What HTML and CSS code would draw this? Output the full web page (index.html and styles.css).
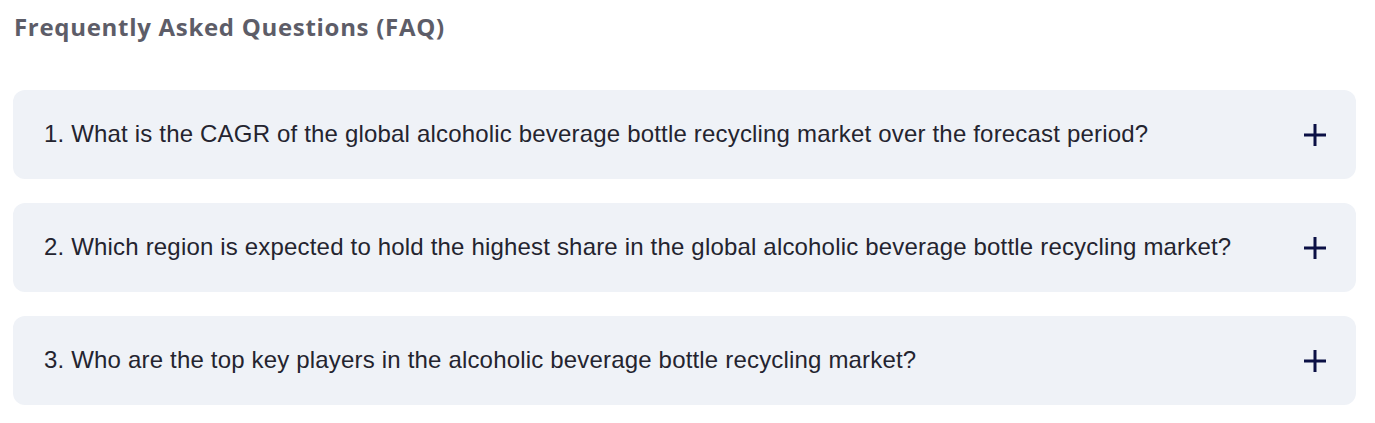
FILE: index.html
```html
<html>
    <head>
        <title>FAQ</title>
        <link rel="stylesheet" href="styles.css">
    </head>
    <body>
        <h2 class="Titulo">Frequently Asked Questions (FAQ)</h2>
        <div class="Lista">
            <!-- Pregunta 1 -->
            <div class="Pregunta">
                <span class="Texto">1. What is the CAGR of the global alcoholic beverage bottle recycling market over the forecast period?</span>
                <svg class="Mas" width="22" height="22" viewBox="0 0 22 22"><path d="M11 0V22M0 11H22" stroke="#0b1045" stroke-width="3"/></svg>
            </div>
            <!-- Pregunta 2 -->
            <div class="Pregunta">
                <span class="Texto">2. Which region is expected to hold the highest share in the global alcoholic beverage bottle recycling market?</span>
                <svg class="Mas" width="22" height="22" viewBox="0 0 22 22"><path d="M11 0V22M0 11H22" stroke="#0b1045" stroke-width="3"/></svg>
            </div>
            <!-- Pregunta 3 -->
            <div class="Pregunta">
                <span class="Texto">3. Who are the top key players in the alcoholic beverage bottle recycling market?</span>
                <svg class="Mas" width="22" height="22" viewBox="0 0 22 22"><path d="M11 0V22M0 11H22" stroke="#0b1045" stroke-width="3"/></svg>
            </div>
        </div>
    </body>
</html>
```
FILE: styles.css
```css
body{
    margin: 0;
    padding: 0 19px 0 13px;
    background-color: white;
}

.Titulo{
    font-family: "Open Sans", sans-serif;
    font-weight: 700;
    font-size: 24px;
    letter-spacing: 0.7px;
    color: #5d5d68;
    margin: 0;
    padding: 11px 0 0 1px;
    line-height: 32px;
}

.Lista{
    display: flex;
    flex-direction: column;
    gap: 24px;
    margin-top: 47px;
}

.Pregunta{
    display: flex;
    justify-content: space-between;
    align-items: center;
    height: 89px;
    padding: 0 30px 0 31px;
    background-color: #eff2f7;
    border-radius: 12px;
}

.Texto{
    font-family: "Liberation Sans", Arial, sans-serif;
    font-size: 24px;
    letter-spacing: 0.18px;
    color: #24242f;
    padding-bottom: 2px;
}

.Mas{
    flex-shrink: 0;
}
```
